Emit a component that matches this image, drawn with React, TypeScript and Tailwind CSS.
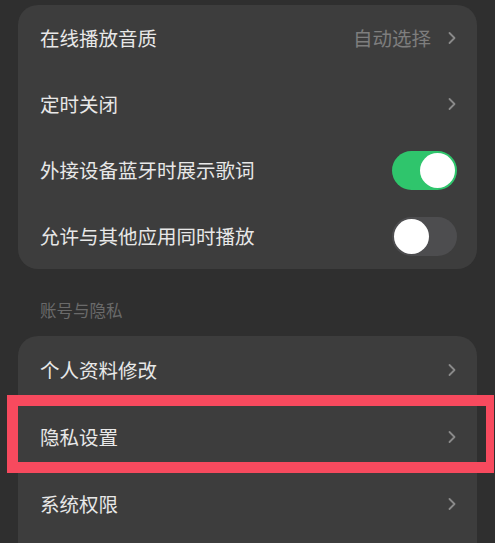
import React from 'react';

const font = { fontFamily: '"Noto Sans CJK SC", "Noto Sans", sans-serif' };

const Chevron = () => (
    <svg width="10" height="14" viewBox="0 0 10 14" fill="none" className="shrink-0">
        <polyline points="2.5,2 7.5,7 2.5,12" stroke="#8a8a8a" strokeWidth="1.8" strokeLinecap="round" strokeLinejoin="round" />
    </svg>
);

const Toggle = ({ on }: { on: boolean }) => (
    <div className={`w-[65px] h-[39px] rounded-full p-[2px] flex items-center ${on ? 'bg-[#2fc56c] justify-end' : 'bg-[#4d4d4f] justify-start'}`}>
        <div className="w-[35px] h-[35px] rounded-full bg-white" />
    </div>
);

const Row = ({ label, value, toggle, tall }: { label: string; value?: string; toggle?: boolean; tall?: boolean }) => (
    <div className={`${tall ? 'h-[67px]' : 'h-[66px]'} flex items-center justify-between pl-[22px] pr-[20px]`}>
        <span className="text-[19.5px] leading-[26px] text-[#e8e8e8]">{label}</span>
        {toggle === undefined ? (
            <div className="flex items-center gap-[16px]">
                {value && <span className="text-[19.5px] leading-[26px] text-[#7e7e7e]">{value}</span>}
                <Chevron />
            </div>
        ) : (
            <Toggle on={toggle} />
        )}
    </div>
);

export default function App() {
    return (
        <div className="relative w-[495px] h-[543px] overflow-hidden bg-[#2f2f2f]" style={font}>
            <div className="mx-[18px] mt-[5px] rounded-[20px] bg-[#3d3d3d]">
                <Row label="在线播放音质" value="自动选择" />
                <Row label="定时关闭" />
                <Row label="外接设备蓝牙时展示歌词" toggle={true} />
                <Row label="允许与其他应用同时播放" toggle={false} />
            </div>

            <div className="pl-[40px] pt-[31px] pb-[16px]">
                <span className="block text-[16.5px] leading-[20px] text-[#6a6a6a]">账号与隐私</span>
            </div>

            <div className="mx-[18px] rounded-t-[20px] bg-[#3d3d3d] pb-[40px]">
                <Row label="个人资料修改" tall />
                <Row label="隐私设置" tall />
                <Row label="系统权限" tall />
            </div>

            <div className="absolute left-[7px] top-[395px] w-[487px] h-[78px] border-[11px] border-r-[8px] border-[#f74a5e]" />
        </div>
    );
}
